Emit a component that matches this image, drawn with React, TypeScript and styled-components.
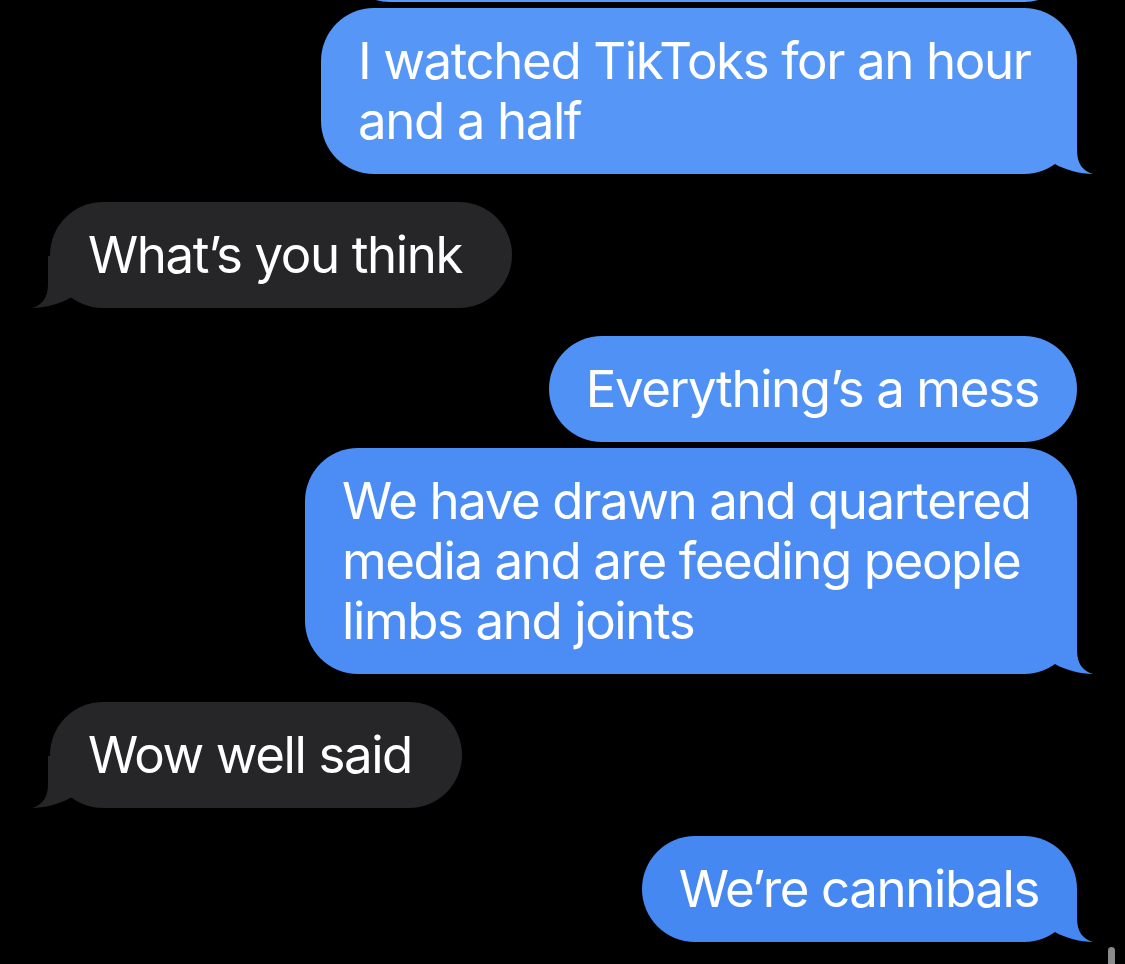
import React from 'react';
import styled, { createGlobalStyle } from 'styled-components';

const GlobalStyle = createGlobalStyle`
  html, body {
    margin: 0;
    padding: 0;
    background: #000;
  }
  body {
    font-family: Inter, "Noto Sans", "Liberation Sans", sans-serif;
    -webkit-font-smoothing: antialiased;
    overflow: hidden;
  }
`;

type Side = 'sent' | 'received';

const Screen = styled.main`
  position: relative;
  width: 1125px;
  height: 964px;
  overflow: hidden;
  background: #000;
`;

const Thread = styled.div`
  display: flex;
  flex-direction: column;
  gap: 28px;
  padding: 0 48px 0 50px;
`;

const Group = styled.div<{ $side: Side; $offset?: number }>`
  display: flex;
  flex-direction: column;
  gap: 6px;
  align-items: ${(p) => (p.$side === 'sent' ? 'flex-end' : 'flex-start')};
  margin-top: ${(p) => p.$offset ?? 0}px;
`;

const Bubble = styled.div<{ $side: Side; $bg: string; $width?: number }>`
  position: relative;
  box-sizing: border-box;
  width: ${(p) => (p.$width ? `${p.$width}px` : 'auto')};
  padding: ${(p) => (p.$side === 'sent' ? '23px 38px 23px 37px' : '23px 50px 23px 38px')};
  border-radius: 53px;
  background: ${(p) => p.$bg};
  color: #fff;
  font-size: 51px;
  line-height: 60px;
  letter-spacing: -1.4px;
  font-weight: 400;
  white-space: pre;
`;

const TailSvg = styled.svg<{ $side: Side }>`
  position: absolute;
  bottom: 0;
  width: 46px;
  height: 52px;
  ${(p) =>
    p.$side === 'sent'
      ? 'right: -16px;'
      : 'left: -18px; transform: scaleX(-1);'}
`;

const ScrollIndicator = styled.div`
  position: absolute;
  left: 1108px;
  top: 947px;
  width: 7px;
  height: 40px;
  border-radius: 4px;
  background: #8a8a8c;
`;

const Tail: React.FC<{ side: Side; color: string }> = ({ side, color }) => (
  <TailSvg $side={side} viewBox="-30 -52 46 52" aria-hidden="true">
    <path
      d="M -22 -10 C -12 -4, 4 0, 16 0 C 6 -3, 0 -10, 0 -24 L 0 -52 L -30 -52 L -30 -12 Z"
      fill={color}
    />
  </TailSvg>
);

type Msg = { text: string; bg: string; tail?: boolean; width?: number };

const BLUE_1 = '#5596F6';
const BLUE_2 = '#4F91F5';
const BLUE_3 = '#4B8DF4';
const BLUE_4 = '#4688F2';
const GREY = '#262628';

const groups: { side: Side; offset?: number; messages: Msg[] }[] = [
  {
    side: 'sent',
    offset: -104,
    messages: [
      { text: ' ', bg: '#5799F7', width: 740 },
      { text: 'I watched TikToks for an hour\nand a half', bg: BLUE_1, tail: true, width: 756 },
    ],
  },
  { side: 'received', messages: [{ text: 'What’s you think', bg: GREY, tail: true }] },
  {
    side: 'sent',
    messages: [
      { text: 'Everything’s a mess', bg: BLUE_2 },
      {
        text: 'We have drawn and quartered\nmedia and are feeding people\nlimbs and joints',
        bg: BLUE_3,
        tail: true,
        width: 772,
      },
    ],
  },
  { side: 'received', messages: [{ text: 'Wow well said', bg: GREY, tail: true }] },
  { side: 'sent', messages: [{ text: 'We’re cannibals', bg: BLUE_4, tail: true }] },
];

export default function App() {
  return (
    <Screen>
      <GlobalStyle />
      <Thread>
        {groups.map((g, gi) => (
          <Group key={gi} $side={g.side} $offset={g.offset}>
            {g.messages.map((m, mi) => (
              <Bubble key={mi} $side={g.side} $bg={m.bg} $width={m.width}>
                {m.text}
                {m.tail && <Tail side={g.side} color={m.bg} />}
              </Bubble>
            ))}
          </Group>
        ))}
      </Thread>
      <ScrollIndicator />
    </Screen>
  );
}
